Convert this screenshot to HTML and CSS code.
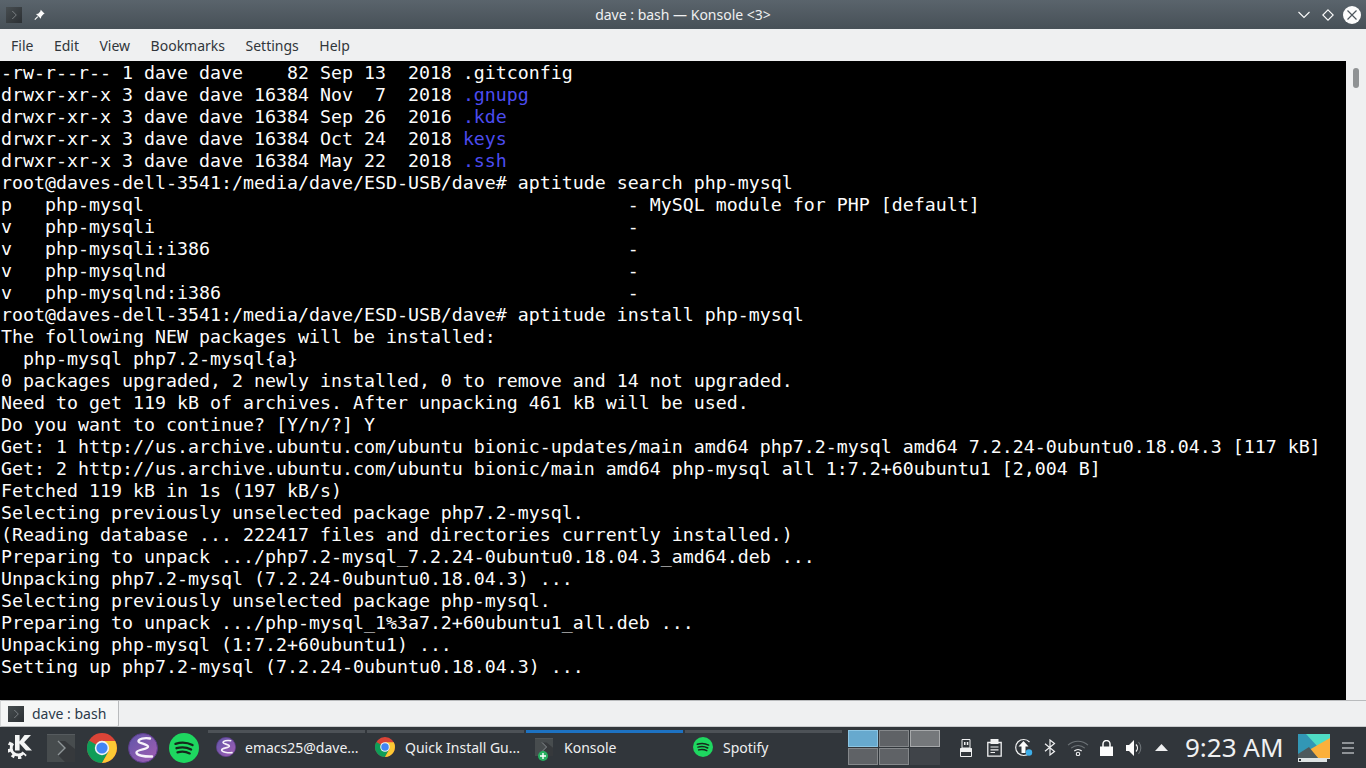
FILE: index.html
```html
<!DOCTYPE html>
<html lang="en">
<head>
<meta charset="utf-8">
<title>dave : bash — Konsole &lt;3&gt;</title>
<link rel="stylesheet" href="styles.css">
</head>
<body>
<svg class="defs" width="0" height="0" aria-hidden="true">
  <defs>
    <linearGradient id="kbg" x1="0" y1="0" x2="1" y2="1"><stop offset="0" stop-color="#474d50"/><stop offset="1" stop-color="#2b2f33"/></linearGradient>
    <linearGradient id="ebg" x1="0" y1="0" x2="1" y2="1"><stop offset="0" stop-color="#5f55a8"/><stop offset="1" stop-color="#a45fb4"/></linearGradient>
    <symbol id="konsole" viewBox="0 0 28 28">
      <rect width="28" height="28" fill="url(#kbg)"/>
      <path d="M11 7l7 7-7 7" fill="none" stroke="#8b9194" stroke-width="1.400"/>
    </symbol>
    <symbol id="konsole-lit" viewBox="0 0 28 28">
      <rect width="28" height="28" fill="#474c4e"/>
      <path d="M11 7l7 7-7 7 7 7h10V15l-10-8z" fill="#36393c"/>
      <rect width="28" height="1" fill="#565b5e"/>
      <path d="M11 7l7 7-7 7" fill="none" stroke="#8f9598" stroke-width="1.400"/>
    </symbol>
    <symbol id="chrome" viewBox="0 0 30 30">
      <circle cx="15" cy="15" r="15" fill="#db4437"/>
      <path d="M15 15L2 7.500A15 15 0 0 0 15 30l6.500-11.500z" fill="#0f9d58"/>
      <path d="M15 8h13.200A15 15 0 0 1 15 30l6.500-11.500z" fill="#fcc934"/>
      <circle cx="15" cy="15" r="7.200" fill="#f1f3f4"/>
      <circle cx="15" cy="15" r="5.600" fill="#4285f4"/>
    </symbol>
    <symbol id="emacs" viewBox="0 0 30 30">
      <circle cx="15" cy="15" r="14.500" fill="url(#ebg)" stroke="#5d3d8c"/>
      <path d="M22 5.500C16 4.500 10.500 6 10.500 8.200 10.500 10.500 20 11 20 13.800 20 16.500 8.500 16.200 8.500 19.500 8.500 22.500 17 23.800 24 23.500" fill="none" stroke="#f6f2fa" stroke-width="2.400" stroke-linecap="round"/>
    </symbol>
    <symbol id="spotify" viewBox="0 0 30 30">
      <circle cx="15" cy="15" r="15" fill="#1ed760"/>
      <path d="M6.500 10.800c5.500-1.700 12-1.300 17 1.300M7.500 15.200c4.800-1.400 10.300-1 14.600 1.300M8.500 19.300c4-1.100 8.600-.8 12.200 1.100" fill="none" stroke="#16281c" stroke-width="2.300" stroke-linecap="round"/>
    </symbol>
  </defs>
</svg>
<div class="window">
  <header class="titlebar">
    <div class="title-left">
      <svg width="16" height="16"><use href="#konsole"/></svg>
      <svg width="13" height="12" viewBox="0 0 14 14"><path d="M8.500 1l4.500 4.500-1.500.6-2.500 2.900-.4 2.500L2.900 5.800l2.500-.4 2.500-2.500z" fill="#fcfcfc"/><path d="M5 9l-3.500 3.500" stroke="#fcfcfc" stroke-width="1.300"/></svg>
    </div>
    <div class="title-text">dave : bash — Konsole &lt;3&gt;</div>
    <div class="title-buttons">
      <svg width="12" height="8" viewBox="0 0 12 8"><path d="M.5 1l5.500 5.500L11.500 1" fill="none" stroke="#fcfcfc" stroke-width="1.100"/></svg>
      <svg width="12" height="12" viewBox="0 0 12 12"><path d="M6 .8L11.200 6 6 11.200.8 6z" fill="none" stroke="#fcfcfc" stroke-width="1.100"/></svg>
      <svg class="close" width="18" height="18" viewBox="0 0 18 18"><circle cx="9" cy="9" r="9" fill="#fcfcfc"/><path d="M4.500 4.500l9 9M13.500 4.500l-9 9" stroke="#4d565d" stroke-width="1.200"/></svg>
    </div>
  </header>
  <nav class="menubar">
    <span>File</span><span>Edit</span><span>View</span><span>Bookmarks</span><span>Settings</span><span>Help</span>
  </nav>
  <div class="content">
    <pre class="terminal">-rw-r--r-- 1 dave dave    82 Sep 13  2018 .gitconfig
drwxr-xr-x 3 dave dave 16384 Nov  7  2018 <span class="dir">.gnupg</span>
drwxr-xr-x 3 dave dave 16384 Sep 26  2016 <span class="dir">.kde</span>
drwxr-xr-x 3 dave dave 16384 Oct 24  2018 <span class="dir">keys</span>
drwxr-xr-x 3 dave dave 16384 May 22  2018 <span class="dir">.ssh</span>
root@daves-dell-3541:/media/dave/ESD-USB/dave# aptitude search php-mysql
p   php-mysql                                            - MySQL module for PHP [default]
v   php-mysqli                                           -
v   php-mysqli:i386                                      -
v   php-mysqlnd                                          -
v   php-mysqlnd:i386                                     -
root@daves-dell-3541:/media/dave/ESD-USB/dave# aptitude install php-mysql
The following NEW packages will be installed:
  php-mysql php7.2-mysql{a}
0 packages upgraded, 2 newly installed, 0 to remove and 14 not upgraded.
Need to get 119 kB of archives. After unpacking 461 kB will be used.
Do you want to continue? [Y/n/?] Y
Get: 1 http://us.archive.ubuntu.com/ubuntu bionic-updates/main amd64 php7.2-mysql amd64 7.2.24-0ubuntu0.18.04.3 [117 kB]
Get: 2 http://us.archive.ubuntu.com/ubuntu bionic/main amd64 php-mysql all 1:7.2+60ubuntu1 [2,004 B]
Fetched 119 kB in 1s (197 kB/s)
Selecting previously unselected package php7.2-mysql.
(Reading database ... 222417 files and directories currently installed.)
Preparing to unpack .../php7.2-mysql_7.2.24-0ubuntu0.18.04.3_amd64.deb ...
Unpacking php7.2-mysql (7.2.24-0ubuntu0.18.04.3) ...
Selecting previously unselected package php-mysql.
Preparing to unpack .../php-mysql_1%3a7.2+60ubuntu1_all.deb ...
Unpacking php-mysql (1:7.2+60ubuntu1) ...
Setting up php7.2-mysql (7.2.24-0ubuntu0.18.04.3) ...</pre>
    <div class="scrollbar"><div class="thumb"></div></div>
  </div>
  <div class="tabbar">
    <div class="tab"><svg width="16" height="16"><use href="#konsole"/></svg><span>dave : bash</span></div>
  </div>
</div>
<footer class="panel">
  <div class="launchers">
    <svg class="kde" width="24" height="26" viewBox="0 0 24 26">
      <path d="M7 0h4.600v6.500L16.500 0H23l-6.800 7.200L24 15.500h-6l-6.400-7v7H7z" fill="#f4f5f5"/>
      <path d="M4.800 8.300A7 7 0 1 0 15.800 17.500" fill="none" stroke="#f4f5f5" stroke-width="3"/>
      <path d="M3 7.500A9 9 0 1 0 17.500 19" fill="none" stroke="#f4f5f5" stroke-width="3.200" stroke-dasharray="3.200 3.600"/>
    </svg>
    <svg class="lk" width="28" height="28"><use href="#konsole-lit"/></svg>
    <svg class="lc" width="30" height="30"><use href="#chrome"/></svg>
    <svg width="30" height="30"><use href="#emacs"/></svg>
    <svg width="30" height="30"><use href="#spotify"/></svg>
  </div>
  <div class="tasks">
    <div class="task"><svg width="20" height="20"><use href="#emacs"/></svg><span>emacs25@dave...</span></div>
    <div class="task wide"><svg width="20" height="20"><use href="#chrome"/></svg><span>Quick Install Gu...</span></div>
    <div class="task active">
      <div class="task-icon"><svg width="18" height="18"><use href="#konsole-lit"/></svg><svg class="badge" width="10" height="10" viewBox="0 0 10 10"><circle cx="5" cy="5" r="5" fill="#27ae60"/><path d="M5 2v6M2 5h6" stroke="#fff" stroke-width="1.400"/></svg></div>
      <span>Konsole</span>
    </div>
    <div class="task wide"><svg width="20" height="20"><use href="#spotify"/></svg><span>Spotify</span></div>
  </div>
  <div class="pager">
    <div class="desk current"></div><div class="desk"></div><div class="desk lit"></div>
    <div class="desk"></div><div class="desk"></div><div class="desk empty"></div>
  </div>
  <div class="tray">
    <svg width="12" height="18" viewBox="0 0 12 18"><path d="M2 .5h8v8.500H2zM.5 9.500h11v8H.5z" fill="none" stroke="#eff0f1"/><path d="M4 3h1.500v3H4zM6.800 3h1.500v3H6.800z" fill="#eff0f1"/><rect x=".5" y="9" width="11" height="4" fill="#eff0f1"/></svg>
    <svg class="t4" width="15" height="18" viewBox="0 0 15 18"><path d="M.8 3.500h13.400v13.700H.8z" fill="none" stroke="#eff0f1" stroke-width="1.300"/><rect x="3.500" y="0" width="8" height="5" fill="#eff0f1"/><path d="M3.500 8h8M3.500 10.800h8M3.500 13.500h4.500" stroke="#eff0f1" stroke-width="1.200"/></svg>
    <svg class="t1" width="19" height="19" viewBox="0 0 19 19"><path d="M15.500 15A8 8 0 1 1 15.500 4" fill="none" stroke="#eff0f1" stroke-width="1.200"/><path d="M9.500 3l5 5.500H11.500V15h-4V8.500H4.500z" fill="#fcfcfc"/><circle cx="15" cy="14.500" r="3.200" fill="#3daee9"/></svg>
    <svg width="12" height="17" viewBox="0 0 12 17"><path d="M1 4.800l9.500 7.700L6 16V1l4.500 3.500L1 12.200" fill="none" stroke="#eff0f1" stroke-width="1.200"/></svg>
    <svg width="22" height="17" viewBox="0 0 22 17"><g fill="none" stroke="#6d7377" stroke-width="1.100"><path d="M1 6.200a14.500 14.500 0 0 1 20 0"/><path d="M4.200 9.200a10 10 0 0 1 13.600 0"/></g><path d="M7.300 12a5.500 5.500 0 0 1 7.400 0" fill="none" stroke="#eff0f1" stroke-width="1.100"/><circle cx="11" cy="15" r="1.700" fill="none" stroke="#eff0f1" stroke-width="1.100"/></svg>
    <svg width="13" height="16" viewBox="0 0 13 16"><rect y="6.500" width="13" height="9.500" fill="#fcfcfc"/><path d="M3 7V4a3.500 3.500 0 0 1 7 0v3" fill="none" stroke="#fcfcfc" stroke-width="1.500"/></svg>
    <svg class="t2" width="17" height="16" viewBox="0 0 17 16"><path d="M0 5h3l5-5v16l-5-5H0z" fill="#fcfcfc"/><path d="M10 4.500a5 5 0 0 1 0 7" fill="none" stroke="#eff0f1" stroke-width="1.300"/><path d="M12.500 2a9 9 0 0 1 0 12" fill="none" stroke="#6d7377" stroke-width="1.100"/></svg>
    <svg class="t1" width="13" height="7" viewBox="0 0 13 7"><path d="M6.500 0L13 7H0z" fill="#eff0f1"/></svg>
  </div>
  <div class="clock">9:23 AM</div>
  <svg class="wall" width="32" height="28" viewBox="0 0 32 28">
    <rect width="32" height="24" fill="#3297b5"/>
    <path d="M8 0h24v7L20 13z" fill="#4fdcc4"/>
    <path d="M32 4v20H20l-9-8z" fill="#fbb03b"/>
    <path d="M0 24V20l11-7 9 11z" fill="#4e5a5c"/>
    <rect y="24" width="32" height="4" fill="#dfe4e4"/>
    <rect x="1" y="25" width="2" height="2" fill="#31363b"/>
    <rect x="29" y="25" width="3" height="3" fill="#31363b"/>
  </svg>
  <div class="hamburger"><i></i><i></i><i></i></div>
</footer>
</body>
</html>
```
FILE: styles.css
```css
* { box-sizing: border-box; }
html, body { margin: 0; padding: 0; }
body {
  width: 1366px;
  height: 768px;
  overflow: hidden;
  display: flex;
  flex-direction: column;
  font-family: "Noto Sans", sans-serif;
  background: #eff0f1;
}
.defs { position: absolute; }
svg { display: block; flex: none; }
.window { flex: 1; min-height: 0; display: flex; flex-direction: column; }

.titlebar {
  height: 29px;
  flex: none;
  display: flex;
  align-items: center;
  justify-content: space-between;
  padding: 0 5px 0 6px;
  position: relative;
  background: linear-gradient(#5a646c, #475057);
}
.title-left { display: flex; align-items: center; gap: 11px; }
.title-text {
  position: absolute;
  left: 0;
  right: 0;
  text-align: center;
  font-size: 14px;
  color: #eff0f1;
  pointer-events: none;
}
.title-buttons { display: flex; align-items: center; gap: 12px; position: relative; }
.title-buttons .close { margin-left: -3px; }

.menubar {
  height: 32px;
  flex: none;
  display: flex;
  align-items: center;
  gap: 20.500px;
  padding: 0 0 0 11px;
  font-size: 14px;
  color: #31363b;
  background: #eff0f1;
}

.content { flex: 1; min-height: 0; display: flex; }
.terminal {
  flex: 1;
  margin: 0;
  padding: 1px 0 0 1px;
  background: #000;
  color: #fcfcfc;
  font-family: "DejaVu Sans Mono", monospace;
  font-size: 18.280px;
  line-height: 22px;
  overflow: hidden;
}
.dir { color: #4c4cf0; }
.scrollbar { width: 20px; flex: none; padding: 7px 0 0 7px; background: #eff0f1; }
.thumb { width: 6px; height: 20px; border-radius: 3px; background: #8f9294; }

.tabbar {
  height: 27px;
  flex: none;
  display: flex;
  background: #eff0f1;
  border-top: 1px solid #b9bbbd;
  border-bottom: 1px solid #c9cbcd;
}
.tab {
  width: 119px;
  height: 27px;
  margin-top: -1px;
  display: flex;
  align-items: center;
  gap: 8px;
  padding-left: 7px;
  background: #f5f6f6;
  border: 1px solid #b9bbbd;
  border-left-color: #d4d6d7;
  border-radius: 0 0 2px 2px;
  font-size: 14px;
  color: #2b3a4a;
}

.panel {
  height: 41px;
  flex: none;
  display: flex;
  align-items: center;
  background: #31363b;
  color: #eff0f1;
}
.launchers { display: flex; align-items: center; gap: 11px; padding-left: 8px; width: 208px; }
.kde { margin-right: 4px; }
.lc { margin-left: 1px; }
.tasks { display: flex; gap: 2px; align-self: stretch; width: 634px; }
.task {
  width: 157px;
  margin-top: 3px;
  display: flex;
  align-items: center;
  gap: 9px;
  padding: 0 0 7px 8px;
  border-top: 3px solid #4d5257;
  font-size: 14px;
  color: #eff0f1;
}
.task.wide { gap: 10px; }
.task.active { border-top-color: #1d72c2; padding-left: 9px; gap: 11px; }
.task-icon { position: relative; }
.badge { position: absolute; left: 3px; top: 13px; }

.pager {
  width: 93px;
  margin-left: 6px;
  display: grid;
  grid-template-columns: repeat(3, 30px);
  grid-template-rows: repeat(2, 17px);
  gap: 1px;
}
.desk { background: #5f6266; border: 1px solid #85888b; }
.desk.current { background: #67a9ce; border-color: #8cc6e4; }
.desk.lit { background: #75787b; border-color: #a6a8aa; }
.desk.empty { background: #404449; border-color: #404449; }

.tray { display: flex; align-items: center; width: 244px; padding-left: 19px; gap: 11px; }
.t1 { margin-left: 1px; }
.t2 { margin-left: 2px; }
.t4 { margin-left: 4px; }
.clock { width: 113px; font-size: 26px; line-height: 30px; padding-bottom: 2px; color: #eff0f1; white-space: nowrap; }
.hamburger { margin-left: 12px; width: 12px; display: flex; flex-direction: column; gap: 3px; }
.hamburger i { display: block; height: 2px; background: #8f9397; }
```
